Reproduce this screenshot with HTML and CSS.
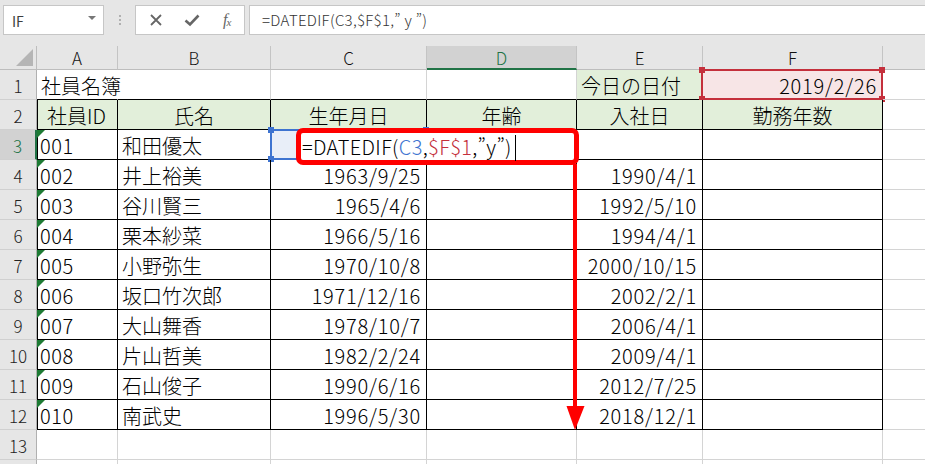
FILE: index.html
```html
<!DOCTYPE html>
<html lang="ja">
<head>
<meta charset="utf-8">
<link rel="stylesheet" href="styles.css">
</head>
<body>
<div class="topbar">
  <div class="namebox"><span>IF</span><span class="dd"></span></div>
  <div class="dots"><i></i><i></i><i></i></div>
  <div class="btns">
    <svg class="ic" width="14" height="14" viewBox="0 0 14 14"><path d="M2 2 L12 12 M12 2 L2 12" stroke="#666" stroke-width="1.8"/></svg>
    <svg class="ic" width="16" height="14" viewBox="0 0 16 14"><path d="M1.5 7.5 L6 11.5 L14.5 2.5" fill="none" stroke="#666" stroke-width="2.6"/></svg>
    <span class="fx">f<sub>x</sub></span>
  </div>
  <div class="formula">=DATEDIF(C3,$F$1,” y ”)</div>
</div>

<div class="wrap">
<div class="sheet">
  <div class="corner"></div>
  <div class="ch">A</div><div class="ch">B</div><div class="ch">C</div><div class="ch sel">D</div><div class="ch">E</div><div class="ch">F</div><div class="ch last"></div>

  <div class="rh">1</div>
  <div class="c top ov">社員名簿</div><div class="c top"></div><div class="c top"></div><div class="c top"></div><div class="c top hdr">今日の日付</div><div class="c top r pink"><span class="refF"><i class="q1"></i><i class="q2"></i><i class="q3"></i><i class="q4"></i></span>2019/2/26</div><div class="c"></div>

  <div class="rh">2</div>
  <div class="c t fa hdr ctr">社員ID</div><div class="c t hdr ctr">氏名</div><div class="c t hdr ctr">生年月日</div><div class="c t hdr ctr">年齢</div><div class="c t hdr ctr">入社日</div><div class="c t hdr ctr">勤務年数</div><div class="c"></div>

  <div class="rh rsel">3</div>
  <div class="c t fa tri">001</div><div class="c t">和田優太</div><div class="c t blue"><span class="refC"><i class="q1"></i><i class="q2"></i><i class="q3"></i><i class="q4"></i></span></div><div class="c t"></div><div class="c t"></div><div class="c t"></div><div class="c"></div>

  <div class="rh">4</div>
  <div class="c t fa tri">002</div><div class="c t">井上裕美</div><div class="c t r">1963/9/25</div><div class="c t"></div><div class="c t r">1990/4/1</div><div class="c t"></div><div class="c"></div>

  <div class="rh">5</div>
  <div class="c t fa tri">003</div><div class="c t">谷川賢三</div><div class="c t r">1965/4/6</div><div class="c t"></div><div class="c t r">1992/5/10</div><div class="c t"></div><div class="c"></div>

  <div class="rh">6</div>
  <div class="c t fa tri">004</div><div class="c t">栗本紗菜</div><div class="c t r">1966/5/16</div><div class="c t"></div><div class="c t r">1994/4/1</div><div class="c t"></div><div class="c"></div>

  <div class="rh">7</div>
  <div class="c t fa tri">005</div><div class="c t">小野弥生</div><div class="c t r">1970/10/8</div><div class="c t"></div><div class="c t r">2000/10/15</div><div class="c t"></div><div class="c"></div>

  <div class="rh">8</div>
  <div class="c t fa tri">006</div><div class="c t">坂口竹次郎</div><div class="c t r">1971/12/16</div><div class="c t"></div><div class="c t r">2002/2/1</div><div class="c t"></div><div class="c"></div>

  <div class="rh">9</div>
  <div class="c t fa tri">007</div><div class="c t">大山舞香</div><div class="c t r">1978/10/7</div><div class="c t"></div><div class="c t r">2006/4/1</div><div class="c t"></div><div class="c"></div>

  <div class="rh">10</div>
  <div class="c t fa tri">008</div><div class="c t">片山哲美</div><div class="c t r">1982/2/24</div><div class="c t"></div><div class="c t r">2009/4/1</div><div class="c t"></div><div class="c"></div>

  <div class="rh">11</div>
  <div class="c t fa tri">009</div><div class="c t">石山俊子</div><div class="c t r">1990/6/16</div><div class="c t"></div><div class="c t r">2012/7/25</div><div class="c t"></div><div class="c"></div>

  <div class="rh">12</div>
  <div class="c t fa tri">010</div><div class="c t">南武史</div><div class="c t r">1996/5/30</div><div class="c t"></div><div class="c t r">2018/12/1</div><div class="c t"></div><div class="c"></div>

  <div class="rh">13</div>
  <div class="c"></div><div class="c"></div><div class="c"></div><div class="c"></div><div class="c"></div><div class="c"></div><div class="c"></div>

  <div class="rh"></div>
  <div class="c"></div><div class="c"></div><div class="c"></div><div class="c"></div><div class="c"></div><div class="c"></div><div class="c"></div>
</div>

<div class="edit">=DATEDIF(<span class="cb">C3</span>,<span class="cr">$F$1</span>,”y”)<span class="caret"></span></div>
<svg class="arrow" width="20" height="268" viewBox="0 0 20 268"><rect x="8" y="0" width="4" height="246" fill="#ff0000"/><polygon points="1.5,242 19.5,242 10,266" fill="#ff0000"/></svg>
</div>
</body>
</html>
```

FILE: styles.css
```css
html, body {
  margin: 0;
  padding: 0;
  width: 925px;
  height: 464px;
  overflow: hidden;
  background: #ffffff;
  font-family: "Noto Sans CJK JP", "Noto Sans", sans-serif;
  color: #000;
}

.topbar {
  height: 46px;
  box-sizing: border-box;
  padding: 5px 0 0 3px;
  background: #e6e6e6;
  display: flex;
  align-items: flex-start;
}

.namebox {
  width: 101px;
  height: 30px;
  box-sizing: border-box;
  background: #fff;
  border: 1px solid #c6c6c6;
  display: flex;
  align-items: center;
  justify-content: space-between;
  padding: 2px 7px 0 8px;
  font-size: 14px;
  color: #3c3c3c;
}

.dd {
  width: 0;
  height: 0;
  border-left: 4px solid transparent;
  border-right: 4px solid transparent;
  border-top: 4px solid #777;
  margin-bottom: 6px;
}

.dots {
  width: 31px;
  height: 30px;
  display: flex;
  flex-direction: column;
  align-items: center;
  justify-content: center;
  gap: 2px;
}
.dots i {
  width: 2px;
  height: 2px;
  background: #b0b0b0;
}

.btns {
  width: 110px;
  height: 30px;
  box-sizing: border-box;
  background: #fff;
  border: 1px solid #c6c6c6;
  display: flex;
  align-items: center;
  padding-left: 13px;
  gap: 21px;
}
.ic { display: block; }
.fx {
  font-family: "Liberation Serif", serif;
  font-style: italic;
  font-size: 16px;
  color: #666;
  margin-left: 2px;
  letter-spacing: -1px;
}
.fx sub {
  font-size: 11px;
  vertical-align: -1px;
}

.formula {
  flex: 1;
  margin-left: 4px;
  height: 30px;
  box-sizing: border-box;
  background: #fff;
  border: 1px solid #c6c6c6;
  border-right: none;
  padding-left: 12px;
  font-size: 15px;
  font-weight: 300;
  letter-spacing: 0.3px;
  line-height: 28px;
  color: #333;
}

.wrap {
  position: relative;
}

.sheet {
  display: grid;
  grid-template-columns: 37px 81px 153px 156px 150px 126px 180px 60px;
  grid-template-rows: 24px repeat(14, 30px);
  background: #fff;
}

.corner {
  background: #e6e6e6;
  border-right: 1px solid #bdbdbd;
  border-bottom: 1px solid #bdbdbd;
  position: relative;
}
.corner::after {
  content: "";
  position: absolute;
  right: 3px;
  bottom: 3px;
  width: 0;
  height: 0;
  border-left: 17px solid transparent;
  border-bottom: 17px solid #b5b5b5;
}

.ch {
  background: #e6e6e6;
  border-right: 1px solid #c4c4c4;
  border-bottom: 1px solid #bdbdbd;
  box-sizing: border-box;
  text-align: center;
  font-size: 17px;
  font-weight: 300;
  line-height: 24px;
  color: #111;
}
.ch.sel {
  background: #d2d2d2;
  color: #217346;
  border-bottom: 2px solid #217346;
}
.ch.last { border-right: none; }

.rh {
  background: #e6e6e6;
  border-right: 1px solid #b0b0b0;
  border-bottom: 1px solid #d0d0d0;
  box-sizing: border-box;
  text-align: center;
  font-size: 17px;
  font-weight: 300;
  line-height: 32px;
  color: #222;
}
.rh.rsel {
  background: #d2d2d2;
  color: #217346;
  border-right: 2px solid #217346;
}

.c {
  border-right: 1px solid #d4d4d4;
  border-bottom: 1px solid #d4d4d4;
  box-sizing: border-box;
  padding: 0 4px 0 4px;
  white-space: nowrap;
  overflow: hidden;
  font-size: 20px;
  font-weight: 300;
  line-height: 31px;
  position: relative;
}
.c.top { border-bottom-color: #000; }
.c.ov { overflow: visible; border-right-color: transparent; }
.c.t {
  border-right-color: #000;
  border-bottom-color: #000;
}
.c.fa {
  box-shadow: inset 1px 0 0 #000;
  padding-left: 3px;
  letter-spacing: 0.6px;
}
.c.r { text-align: right; padding-right: 5px; letter-spacing: 0.8px; }
.c.ctr { text-align: center; letter-spacing: 0; }
.c.hdr { background: #e2efda; }
.c.pink { background: #f7e5e6; overflow: visible; }
.c.blue { background: #e8eef8; overflow: visible; }

.c.tri::before {
  content: "";
  position: absolute;
  left: 0;
  top: 0;
  width: 0;
  height: 0;
  border-top: 8px solid #1e7b34;
  border-right: 8px solid transparent;
}

.refF, .refC {
  position: absolute;
  left: -2px;
  top: -1px;
  right: -1px;
  bottom: -1px;
  box-sizing: border-box;
  pointer-events: none;
}
.refF { border: 2px solid #c4303c; }
.refC { border: 2px solid #3d73d0; left: -1px; }
.refF i, .refC i {
  position: absolute;
  width: 6px;
  height: 6px;
}
.refF i { background: #c4303c; }
.refC i { background: #3d73d0; }
.q1 { left: -4px; top: -4px; }
.q2 { right: -4px; top: -4px; }
.q3 { left: -4px; bottom: -4px; }
.q4 { right: -4px; bottom: -4px; }

.edit {
  position: absolute;
  left: 296px;
  top: 82px;
  width: 283px;
  height: 37px;
  box-sizing: border-box;
  border: 5px solid #ff0000;
  border-radius: 7px;
  background: #fff;
  padding-left: 1px;
  font-size: 20px;
  font-weight: 300;
  letter-spacing: 0.35px;
  line-height: 28px;
  white-space: nowrap;
  color: #000;
}
.cb { color: #3d73d0; }
.cr { color: #c4303c; }
.caret {
  display: inline-block;
  width: 1px;
  height: 26px;
  background: #000;
  margin-left: 3px;
  vertical-align: -6px;
}

.arrow {
  position: absolute;
  left: 565px;
  top: 118px;
}
```
